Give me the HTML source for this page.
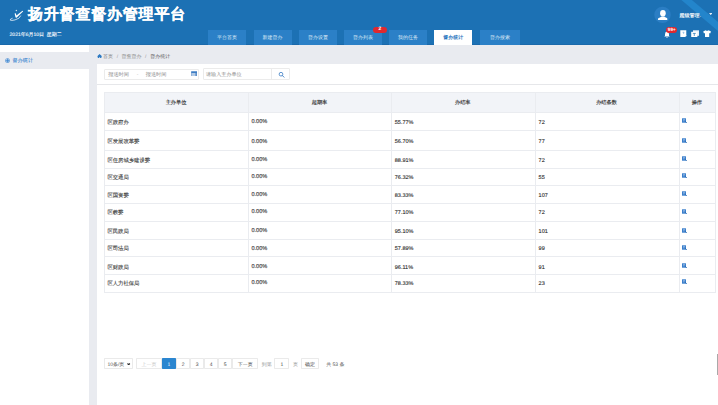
<!DOCTYPE html>
<html><head><meta charset="utf-8">
<style>
*{box-sizing:border-box;margin:0;padding:0}
html,body{text-rendering:geometricPrecision;width:718px;height:405px;overflow:hidden;background:#e9ebf0;font-family:"Liberation Sans",sans-serif;color:#333}
.a{position:absolute}
.t{white-space:nowrap}
.s{}
</style></head><body>

<div class="a" style="left:0.00px;top:0.00px;width:718.00px;height:44.70px;background:#1c71b4;"></div>
<div class="a" style="left:0.00px;top:44.00px;width:718.00px;height:0.70px;background:#1a69ab;"></div>
<svg class="a" style="left:0;top:0" width="718" height="45"><polygon points="681.4,0 691.9,0 718,22 718,31" fill="#2385cb"/></svg>
<svg class="a" style="left:0;top:0" width="30" height="30" viewBox="0 0 30 30">
<circle cx="16.4" cy="10.4" r="0.75" fill="#fff" opacity="0.75"/>
<path d="M14.6 13.4 Q15.4 12.9 15.9 13.6 L16.4 15.6 L22.2 10.9 Q23.2 10.6 23 11.6 L16.8 17.4 Q16 18 15.5 17.3 Z" fill="#fff"/>
<path d="M20.8 15.6 Q20 18.6 15 19.9 Q10.8 21 10.2 20.1 Q9.8 19.2 12.6 18.2" fill="none" stroke="#fff" stroke-width="0.85" opacity="0.85"/>
</svg>
<div class="a t" style="left:28px;top:4.6px;font-size:15px;letter-spacing:0.8px;line-height:20px;font-weight:bold;color:#fff;-webkit-text-stroke:0.2px #fff">扬升督查督办管理平台</div>
<div class="a t s" style="left:9.60px;top:30.10px;font-size:5.00px;line-height:10px;color:#f0f5fb;font-weight:normal;-webkit-text-stroke:0.12px #f0f5fb;">2021年6月10日&nbsp;&nbsp;星期二</div>
<div class="a" style="left:208.00px;top:30.00px;width:38.00px;height:14.60px;background:#2b80c7;"></div>
<div class="a t s" style="left:208.00px;top:33.00px;width:38.00px;text-align:center;font-size:5.00px;line-height:10px;color:#dbe8f5;font-weight:normal;">平台首页</div>
<div class="a" style="left:253.50px;top:30.00px;width:38.00px;height:14.60px;background:#2b80c7;"></div>
<div class="a t s" style="left:253.50px;top:33.00px;width:38.00px;text-align:center;font-size:5.00px;line-height:10px;color:#dbe8f5;font-weight:normal;">新建督办</div>
<div class="a" style="left:299.00px;top:30.00px;width:38.00px;height:14.60px;background:#2b80c7;"></div>
<div class="a t s" style="left:299.00px;top:33.00px;width:38.00px;text-align:center;font-size:5.00px;line-height:10px;color:#dbe8f5;font-weight:normal;">督办设置</div>
<div class="a" style="left:344.00px;top:30.00px;width:38.00px;height:14.60px;background:#2b80c7;"></div>
<div class="a t s" style="left:344.00px;top:33.00px;width:38.00px;text-align:center;font-size:5.00px;line-height:10px;color:#dbe8f5;font-weight:normal;">督办列表</div>
<div class="a" style="left:389.00px;top:30.00px;width:38.00px;height:14.60px;background:#2b80c7;"></div>
<div class="a t s" style="left:389.00px;top:33.00px;width:38.00px;text-align:center;font-size:5.00px;line-height:10px;color:#dbe8f5;font-weight:normal;">我的任务</div>
<div class="a" style="left:434.20px;top:30.00px;width:38.00px;height:14.80px;background:#fff;"></div>
<div class="a t s" style="left:434.20px;top:33.00px;width:38.00px;text-align:center;font-size:5.00px;line-height:10px;color:#2b77c0;font-weight:bold;">督办统计</div>
<div class="a" style="left:480.00px;top:30.00px;width:40.00px;height:14.60px;background:#2b80c7;"></div>
<div class="a t s" style="left:480.00px;top:33.00px;width:40.00px;text-align:center;font-size:5.00px;line-height:10px;color:#dbe8f5;font-weight:normal;">督办搜索</div>
<div class="a t" style="left:372.7px;top:27px;width:14.3px;height:5.8px;border-radius:3px;background:#e0282e;color:#fff;font-size:5px;line-height:5.8px;text-align:center;font-weight:bold">2</div>
<svg class="a" style="left:640px;top:0" width="40" height="30" viewBox="640 0 40 30">
<circle cx="662.5" cy="14.9" r="8.2" fill="#2b7ec4"/>
<ellipse cx="662.9" cy="13.3" rx="2.8" ry="3.3" fill="#fff"/>
<path d="M657.9 20.1 L658.1 18.6 Q658.4 17.6 660 17.4 L661.6 16.6 L664.2 16.6 L665.8 17.4 Q667.3 17.6 667.3 18.6 L667.3 20.1 Z" fill="#fff"/></svg>
<div class="a t s" style="left:679.50px;top:11.30px;font-size:5.00px;line-height:10px;color:#fff;font-weight:normal;-webkit-text-stroke:0.15px #fff;">超级管理.</div>
<svg class="a" style="left:708.5px;top:13.3px" width="3.5" height="2.2" viewBox="0 0 3.5 2.2"><path d="M0 0 L3.5 0 L1.75 2.2Z" fill="#e3edf7"/></svg>
<svg class="a" style="left:663.5px;top:30.5px" width="6" height="7" viewBox="0 0 6 7"><path d="M3 0.5 Q5 0.8 5 3.2 L5 4.8 L5.8 5.6 L0.2 5.6 L1 4.8 L1 3.2 Q1 0.8 3 0.5Z M2.2 6 L3.8 6 Q3.6 6.8 3 6.8 Q2.4 6.8 2.2 6Z" fill="#fff"/></svg>
<div class="a t" style="left:666.3px;top:27.1px;width:10.9px;height:5.7px;border-radius:3px;background:#e0282e;color:#fff;font-size:4.6px;line-height:5.7px;text-align:center;font-weight:bold">99+</div>
<svg class="a" style="left:679.5px;top:30px" width="7.2" height="7.2" viewBox="0 0 7.2 7.2"><path d="M0.3 0.2 L6.3 0.2 L6.3 5.2 L5.4 6.9 L0.3 6.9 Z" fill="#fff"/><path d="M2.6 2.3 L4 2.3 L3.5 3.8" fill="none" stroke="#5d9ad6" stroke-width="0.6"/><path d="M5.3 6.9 L6.9 5.4" stroke="#cfe0f3" stroke-width="0.6"/></svg>
<svg class="a" style="left:691px;top:30px" width="8.4" height="7.4" viewBox="0 0 8.4 7.4"><rect x="2" y="0.3" width="6" height="5.5" fill="#e9f1fa"/><rect x="0.2" y="1.8" width="6.2" height="5.5" fill="#fff"/><path d="M1.8 3.4 L4.8 3.4 M3.3 3.4 L3.3 6" stroke="#1c71b4" stroke-width="0.7"/></svg>
<svg class="a" style="left:703px;top:30px" width="8.2" height="7.4" viewBox="0 0 8.2 7.4"><path d="M2.6 0.3 Q4.1 1.4 5.6 0.3 L8 1.6 L7.2 3.4 L6.2 3 L6.2 7.2 L2 7.2 L2 3 L1 3.4 L0.2 1.6Z" fill="#fff"/></svg>
<div class="a" style="left:0.00px;top:45.00px;width:89.00px;height:360.00px;background:#fff;"></div>
<div class="a" style="left:0.00px;top:51.70px;width:89.00px;height:17.20px;background:#e9ebf0;"></div>
<svg class="a" style="left:5px;top:57.6px" width="5" height="5.4" viewBox="0 0 5 5.4"><circle cx="2.5" cy="2.6" r="2.2" fill="#bcd5ef" stroke="#5b98d6" stroke-width="0.5"/><path d="M2.7 0.6 L2.7 4.6 M0.5 2.8 L4.5 2.8" stroke="#3f86cf" stroke-width="0.9"/></svg>
<div class="a t s" style="left:12.60px;top:56.30px;font-size:5.10px;line-height:10px;color:#3a86d0;font-weight:normal;-webkit-text-stroke:0.08px #3a86d0;">督办统计</div>
<svg class="a" style="left:96.8px;top:53.6px" width="5.2" height="4.8" viewBox="0 0 5.2 4.8"><path d="M2.6 0 L5.2 2.4 L4.4 2.4 L4.4 4.8 L3.1 4.8 L3.1 3.3 L2.1 3.3 L2.1 4.8 L0.8 4.8 L0.8 2.4 L0 2.4Z" fill="#2a78c2"/></svg>
<div class="a t s" style="left:103.00px;top:52.10px;font-size:5.00px;line-height:10px;color:#888;font-weight:normal;">首页</div>
<div class="a t s" style="left:116.80px;top:52.10px;font-size:5.00px;line-height:10px;color:#999;font-weight:normal;">/</div>
<div class="a t s" style="left:121.60px;top:52.10px;font-size:5.00px;line-height:10px;color:#888;font-weight:normal;">督查督办</div>
<div class="a t s" style="left:145.00px;top:52.10px;font-size:5.00px;line-height:10px;color:#999;font-weight:normal;">/</div>
<div class="a t s" style="left:150.20px;top:52.10px;font-size:5.00px;line-height:10px;color:#555;font-weight:normal;">督办统计</div>
<div class="a" style="left:97.00px;top:64.00px;width:621.00px;height:341.00px;background:#fff;"></div>
<div class="a" style="left:104.4px;top:69.4px;width:94.2px;height:10.2px;border:0.6px solid #ebebeb;border-radius:1px"></div>
<div class="a t s" style="left:108.20px;top:70.40px;font-size:5.20px;line-height:10px;color:#8a8a8a;font-weight:normal;">报送时间</div>
<div class="a t s" style="left:136.80px;top:70.40px;font-size:5.00px;line-height:10px;color:#bbb;font-weight:normal;">-</div>
<div class="a t s" style="left:145.70px;top:70.40px;font-size:5.20px;line-height:10px;color:#8a8a8a;font-weight:normal;">报送时间</div>
<svg class="a" style="left:190.9px;top:70.9px" width="6.2" height="5.6" viewBox="0 0 6.2 5.6"><rect x="0.2" y="0.4" width="5.8" height="5" fill="#b3cbe6"/><rect x="0.2" y="0.4" width="5.8" height="1.5" fill="#2f74c0"/><rect x="4.4" y="1.9" width="1.6" height="3.5" fill="#5d8fc9"/><rect x="0.2" y="1.9" width="0.7" height="3.5" fill="#7ea6d6"/></svg>
<div class="a" style="left:202.9px;top:68.4px;width:87.3px;height:12px;border:0.6px solid #ebebeb;border-radius:1px"></div>
<div class="a" style="left:271.00px;top:68.60px;width:0.60px;height:11.60px;background:#ebebeb;"></div>
<div class="a t s" style="left:206.00px;top:70.40px;font-size:5.10px;line-height:10px;color:#8a8a8a;font-weight:normal;">请输入主办单位</div>
<svg class="a" style="left:0;top:0" width="300" height="90" viewBox="0 0 300 90"><circle cx="281" cy="74.2" r="1.85" fill="none" stroke="#2f74c0" stroke-width="0.75"/><path d="M282.4 75.6 L284 77.2" stroke="#2f74c0" stroke-width="0.85" stroke-linecap="round"/></svg>
<div class="a" style="left:97.00px;top:84.00px;width:621.00px;height:0.80px;background:#e6e7ea;"></div>
<div class="a" style="left:104.00px;top:92.00px;width:611.20px;height:19.70px;background:#f2f4f8;"></div>
<div class="a" style="left:104.00px;top:92.00px;width:611.20px;height:0.80px;background:#eaecf0;"></div>
<div class="a" style="left:104.00px;top:111.70px;width:611.20px;height:0.80px;background:#eaecf0;"></div>
<div class="a" style="left:104.00px;top:130.40px;width:611.20px;height:0.80px;background:#eaecf0;"></div>
<div class="a" style="left:104.00px;top:150.20px;width:611.20px;height:0.80px;background:#eaecf0;"></div>
<div class="a" style="left:104.00px;top:167.80px;width:611.20px;height:0.80px;background:#eaecf0;"></div>
<div class="a" style="left:104.00px;top:185.40px;width:611.20px;height:0.80px;background:#eaecf0;"></div>
<div class="a" style="left:104.00px;top:203.00px;width:611.20px;height:0.80px;background:#eaecf0;"></div>
<div class="a" style="left:104.00px;top:221.30px;width:611.20px;height:0.80px;background:#eaecf0;"></div>
<div class="a" style="left:104.00px;top:238.70px;width:611.20px;height:0.80px;background:#eaecf0;"></div>
<div class="a" style="left:104.00px;top:256.30px;width:611.20px;height:0.80px;background:#eaecf0;"></div>
<div class="a" style="left:104.00px;top:274.40px;width:611.20px;height:0.80px;background:#eaecf0;"></div>
<div class="a" style="left:104.00px;top:292.10px;width:611.20px;height:0.80px;background:#eaecf0;"></div>
<div class="a" style="left:104.00px;top:92.00px;width:0.80px;height:200.90px;background:#eaecf0;"></div>
<div class="a" style="left:248.00px;top:92.00px;width:0.80px;height:200.90px;background:#eaecf0;"></div>
<div class="a" style="left:391.00px;top:92.00px;width:0.80px;height:200.90px;background:#eaecf0;"></div>
<div class="a" style="left:534.50px;top:92.00px;width:0.80px;height:200.90px;background:#eaecf0;"></div>
<div class="a" style="left:678.50px;top:92.00px;width:0.80px;height:200.90px;background:#eaecf0;"></div>
<div class="a" style="left:715.20px;top:92.00px;width:0.80px;height:200.90px;background:#eaecf0;"></div>
<div class="a t s" style="left:136.00px;top:97.70px;width:80.00px;text-align:center;font-size:5.20px;line-height:10px;color:#333;font-weight:normal;-webkit-text-stroke:0.14px #333;">主办单位</div>
<div class="a t s" style="left:279.50px;top:97.70px;width:80.00px;text-align:center;font-size:5.20px;line-height:10px;color:#333;font-weight:normal;-webkit-text-stroke:0.14px #333;">超期率</div>
<div class="a t s" style="left:422.75px;top:97.70px;width:80.00px;text-align:center;font-size:5.20px;line-height:10px;color:#333;font-weight:normal;-webkit-text-stroke:0.14px #333;">办结率</div>
<div class="a t s" style="left:566.50px;top:97.70px;width:80.00px;text-align:center;font-size:5.20px;line-height:10px;color:#333;font-weight:normal;-webkit-text-stroke:0.14px #333;">办结条数</div>
<div class="a t s" style="left:656.85px;top:97.70px;width:80.00px;text-align:center;font-size:5.20px;line-height:10px;color:#333;font-weight:normal;-webkit-text-stroke:0.14px #333;">操作</div>
<div class="a t s" style="left:107.40px;top:117.80px;font-size:5.35px;line-height:10px;color:#444;font-weight:normal;-webkit-text-stroke:0.12px #444;">区政府办</div>
<div class="a t s" style="left:251.40px;top:117.20px;font-size:5.60px;line-height:10px;color:#555;font-weight:normal;-webkit-text-stroke:0.2px #555;">0.00%</div>
<div class="a t s" style="left:394.80px;top:117.80px;font-size:5.50px;line-height:10px;color:#2b2b2b;font-weight:normal;-webkit-text-stroke:0.12px #2b2b2b;">55.77%</div>
<div class="a t s" style="left:538.60px;top:117.80px;font-size:5.50px;line-height:10px;color:#2b2b2b;font-weight:normal;-webkit-text-stroke:0.12px #2b2b2b;">72</div>
<svg class="a" style="left:682px;top:118.40px" width="5" height="5" viewBox="0 0 5 5"><rect x="0" y="0.3" width="4" height="4.4" fill="#3b7fcc"/><path d="M1 1.6 L3 1.6 M1 2.8 L2.6 2.8" stroke="#cfe0f3" stroke-width="0.5"/><path d="M3.2 3.4 L4.9 4.9" stroke="#1c5ea8" stroke-width="0.8"/></svg>
<div class="a t s" style="left:107.40px;top:137.10px;font-size:5.35px;line-height:10px;color:#444;font-weight:normal;-webkit-text-stroke:0.12px #444;">区发展改革委</div>
<div class="a t s" style="left:251.40px;top:136.50px;font-size:5.60px;line-height:10px;color:#555;font-weight:normal;-webkit-text-stroke:0.2px #555;">0.00%</div>
<div class="a t s" style="left:394.80px;top:137.10px;font-size:5.50px;line-height:10px;color:#2b2b2b;font-weight:normal;-webkit-text-stroke:0.12px #2b2b2b;">56.70%</div>
<div class="a t s" style="left:538.60px;top:137.10px;font-size:5.50px;line-height:10px;color:#2b2b2b;font-weight:normal;-webkit-text-stroke:0.12px #2b2b2b;">77</div>
<svg class="a" style="left:682px;top:137.70px" width="5" height="5" viewBox="0 0 5 5"><rect x="0" y="0.3" width="4" height="4.4" fill="#3b7fcc"/><path d="M1 1.6 L3 1.6 M1 2.8 L2.6 2.8" stroke="#cfe0f3" stroke-width="0.5"/><path d="M3.2 3.4 L4.9 4.9" stroke="#1c5ea8" stroke-width="0.8"/></svg>
<div class="a t s" style="left:107.40px;top:155.60px;font-size:5.35px;line-height:10px;color:#444;font-weight:normal;-webkit-text-stroke:0.12px #444;">区住房城乡建设委</div>
<div class="a t s" style="left:251.40px;top:155.00px;font-size:5.60px;line-height:10px;color:#555;font-weight:normal;-webkit-text-stroke:0.2px #555;">0.00%</div>
<div class="a t s" style="left:394.80px;top:155.60px;font-size:5.50px;line-height:10px;color:#2b2b2b;font-weight:normal;-webkit-text-stroke:0.12px #2b2b2b;">88.91%</div>
<div class="a t s" style="left:538.60px;top:155.60px;font-size:5.50px;line-height:10px;color:#2b2b2b;font-weight:normal;-webkit-text-stroke:0.12px #2b2b2b;">72</div>
<svg class="a" style="left:682px;top:156.20px" width="5" height="5" viewBox="0 0 5 5"><rect x="0" y="0.3" width="4" height="4.4" fill="#3b7fcc"/><path d="M1 1.6 L3 1.6 M1 2.8 L2.6 2.8" stroke="#cfe0f3" stroke-width="0.5"/><path d="M3.2 3.4 L4.9 4.9" stroke="#1c5ea8" stroke-width="0.8"/></svg>
<div class="a t s" style="left:107.40px;top:172.80px;font-size:5.35px;line-height:10px;color:#444;font-weight:normal;-webkit-text-stroke:0.12px #444;">区交通局</div>
<div class="a t s" style="left:251.40px;top:172.20px;font-size:5.60px;line-height:10px;color:#555;font-weight:normal;-webkit-text-stroke:0.2px #555;">0.00%</div>
<div class="a t s" style="left:394.80px;top:172.80px;font-size:5.50px;line-height:10px;color:#2b2b2b;font-weight:normal;-webkit-text-stroke:0.12px #2b2b2b;">76.32%</div>
<div class="a t s" style="left:538.60px;top:172.80px;font-size:5.50px;line-height:10px;color:#2b2b2b;font-weight:normal;-webkit-text-stroke:0.12px #2b2b2b;">55</div>
<svg class="a" style="left:682px;top:173.40px" width="5" height="5" viewBox="0 0 5 5"><rect x="0" y="0.3" width="4" height="4.4" fill="#3b7fcc"/><path d="M1 1.6 L3 1.6 M1 2.8 L2.6 2.8" stroke="#cfe0f3" stroke-width="0.5"/><path d="M3.2 3.4 L4.9 4.9" stroke="#1c5ea8" stroke-width="0.8"/></svg>
<div class="a t s" style="left:107.40px;top:190.60px;font-size:5.35px;line-height:10px;color:#444;font-weight:normal;-webkit-text-stroke:0.12px #444;">区国资委</div>
<div class="a t s" style="left:251.40px;top:190.00px;font-size:5.60px;line-height:10px;color:#555;font-weight:normal;-webkit-text-stroke:0.2px #555;">0.00%</div>
<div class="a t s" style="left:394.80px;top:190.60px;font-size:5.50px;line-height:10px;color:#2b2b2b;font-weight:normal;-webkit-text-stroke:0.12px #2b2b2b;">83.33%</div>
<div class="a t s" style="left:538.60px;top:190.60px;font-size:5.50px;line-height:10px;color:#2b2b2b;font-weight:normal;-webkit-text-stroke:0.12px #2b2b2b;">107</div>
<svg class="a" style="left:682px;top:191.20px" width="5" height="5" viewBox="0 0 5 5"><rect x="0" y="0.3" width="4" height="4.4" fill="#3b7fcc"/><path d="M1 1.6 L3 1.6 M1 2.8 L2.6 2.8" stroke="#cfe0f3" stroke-width="0.5"/><path d="M3.2 3.4 L4.9 4.9" stroke="#1c5ea8" stroke-width="0.8"/></svg>
<div class="a t s" style="left:107.40px;top:208.00px;font-size:5.35px;line-height:10px;color:#444;font-weight:normal;-webkit-text-stroke:0.12px #444;">区教委</div>
<div class="a t s" style="left:251.40px;top:207.40px;font-size:5.60px;line-height:10px;color:#555;font-weight:normal;-webkit-text-stroke:0.2px #555;">0.00%</div>
<div class="a t s" style="left:394.80px;top:208.00px;font-size:5.50px;line-height:10px;color:#2b2b2b;font-weight:normal;-webkit-text-stroke:0.12px #2b2b2b;">77.10%</div>
<div class="a t s" style="left:538.60px;top:208.00px;font-size:5.50px;line-height:10px;color:#2b2b2b;font-weight:normal;-webkit-text-stroke:0.12px #2b2b2b;">72</div>
<svg class="a" style="left:682px;top:208.60px" width="5" height="5" viewBox="0 0 5 5"><rect x="0" y="0.3" width="4" height="4.4" fill="#3b7fcc"/><path d="M1 1.6 L3 1.6 M1 2.8 L2.6 2.8" stroke="#cfe0f3" stroke-width="0.5"/><path d="M3.2 3.4 L4.9 4.9" stroke="#1c5ea8" stroke-width="0.8"/></svg>
<div class="a t s" style="left:107.40px;top:227.00px;font-size:5.35px;line-height:10px;color:#444;font-weight:normal;-webkit-text-stroke:0.12px #444;">区民政局</div>
<div class="a t s" style="left:251.40px;top:226.40px;font-size:5.60px;line-height:10px;color:#555;font-weight:normal;-webkit-text-stroke:0.2px #555;">0.00%</div>
<div class="a t s" style="left:394.80px;top:227.00px;font-size:5.50px;line-height:10px;color:#2b2b2b;font-weight:normal;-webkit-text-stroke:0.12px #2b2b2b;">95.10%</div>
<div class="a t s" style="left:538.60px;top:227.00px;font-size:5.50px;line-height:10px;color:#2b2b2b;font-weight:normal;-webkit-text-stroke:0.12px #2b2b2b;">101</div>
<svg class="a" style="left:682px;top:227.60px" width="5" height="5" viewBox="0 0 5 5"><rect x="0" y="0.3" width="4" height="4.4" fill="#3b7fcc"/><path d="M1 1.6 L3 1.6 M1 2.8 L2.6 2.8" stroke="#cfe0f3" stroke-width="0.5"/><path d="M3.2 3.4 L4.9 4.9" stroke="#1c5ea8" stroke-width="0.8"/></svg>
<div class="a t s" style="left:107.40px;top:244.20px;font-size:5.35px;line-height:10px;color:#444;font-weight:normal;-webkit-text-stroke:0.12px #444;">区司法局</div>
<div class="a t s" style="left:251.40px;top:243.60px;font-size:5.60px;line-height:10px;color:#555;font-weight:normal;-webkit-text-stroke:0.2px #555;">0.00%</div>
<div class="a t s" style="left:394.80px;top:244.20px;font-size:5.50px;line-height:10px;color:#2b2b2b;font-weight:normal;-webkit-text-stroke:0.12px #2b2b2b;">57.89%</div>
<div class="a t s" style="left:538.60px;top:244.20px;font-size:5.50px;line-height:10px;color:#2b2b2b;font-weight:normal;-webkit-text-stroke:0.12px #2b2b2b;">99</div>
<svg class="a" style="left:682px;top:244.80px" width="5" height="5" viewBox="0 0 5 5"><rect x="0" y="0.3" width="4" height="4.4" fill="#3b7fcc"/><path d="M1 1.6 L3 1.6 M1 2.8 L2.6 2.8" stroke="#cfe0f3" stroke-width="0.5"/><path d="M3.2 3.4 L4.9 4.9" stroke="#1c5ea8" stroke-width="0.8"/></svg>
<div class="a t s" style="left:107.40px;top:262.50px;font-size:5.35px;line-height:10px;color:#444;font-weight:normal;-webkit-text-stroke:0.12px #444;">区财政局</div>
<div class="a t s" style="left:251.40px;top:261.90px;font-size:5.60px;line-height:10px;color:#555;font-weight:normal;-webkit-text-stroke:0.2px #555;">0.00%</div>
<div class="a t s" style="left:394.80px;top:262.50px;font-size:5.50px;line-height:10px;color:#2b2b2b;font-weight:normal;-webkit-text-stroke:0.12px #2b2b2b;">96.11%</div>
<div class="a t s" style="left:538.60px;top:262.50px;font-size:5.50px;line-height:10px;color:#2b2b2b;font-weight:normal;-webkit-text-stroke:0.12px #2b2b2b;">91</div>
<svg class="a" style="left:682px;top:263.10px" width="5" height="5" viewBox="0 0 5 5"><rect x="0" y="0.3" width="4" height="4.4" fill="#3b7fcc"/><path d="M1 1.6 L3 1.6 M1 2.8 L2.6 2.8" stroke="#cfe0f3" stroke-width="0.5"/><path d="M3.2 3.4 L4.9 4.9" stroke="#1c5ea8" stroke-width="0.8"/></svg>
<div class="a t s" style="left:107.40px;top:278.70px;font-size:5.35px;line-height:10px;color:#444;font-weight:normal;-webkit-text-stroke:0.12px #444;">区人力社保局</div>
<div class="a t s" style="left:251.40px;top:278.10px;font-size:5.60px;line-height:10px;color:#555;font-weight:normal;-webkit-text-stroke:0.2px #555;">0.00%</div>
<div class="a t s" style="left:394.80px;top:278.70px;font-size:5.50px;line-height:10px;color:#2b2b2b;font-weight:normal;-webkit-text-stroke:0.12px #2b2b2b;">78.33%</div>
<div class="a t s" style="left:538.60px;top:278.70px;font-size:5.50px;line-height:10px;color:#2b2b2b;font-weight:normal;-webkit-text-stroke:0.12px #2b2b2b;">23</div>
<svg class="a" style="left:682px;top:279.30px" width="5" height="5" viewBox="0 0 5 5"><rect x="0" y="0.3" width="4" height="4.4" fill="#3b7fcc"/><path d="M1 1.6 L3 1.6 M1 2.8 L2.6 2.8" stroke="#cfe0f3" stroke-width="0.5"/><path d="M3.2 3.4 L4.9 4.9" stroke="#1c5ea8" stroke-width="0.8"/></svg>
<div class="a t" style="left:104.40px;top:358.1px;width:28.40px;height:11.3px;border:0.6px solid #eaeaea;background:#fff;border-radius:0.8px"></div>
<div class="a t s" style="left:107.40px;top:359.85px;font-size:5.00px;line-height:10px;color:#555;font-weight:normal;">10条/页</div>
<svg class="a" style="left:127.3px;top:362.55px" width="3.4" height="2.4" viewBox="0 0 3.4 2.4"><path d="M0.5 0.5 L1.7 1.7 L2.9 0.5" fill="none" stroke="#222" stroke-width="1.1"/></svg>
<div class="a t" style="left:136.30px;top:358.1px;width:25.40px;height:11.3px;border:0.6px solid #eaeaea;background:#fff;border-radius:0.8px"></div>
<div class="a t s" style="left:131.30px;top:359.85px;width:35.40px;text-align:center;font-size:5.00px;line-height:10px;color:#c8c8c8;font-weight:normal;">上一页</div>
<div class="a t" style="left:161.70px;top:358.1px;width:14.30px;height:11.3px;border:0.6px solid #2b86d0;background:#2b86d0;border-radius:0.8px"></div>
<div class="a t s" style="left:156.70px;top:359.85px;width:24.30px;text-align:center;font-size:5.00px;line-height:10px;color:#fff;font-weight:normal;">1</div>
<div class="a t" style="left:176.00px;top:358.1px;width:14.10px;height:11.3px;border:0.6px solid #eaeaea;background:#fff;border-radius:0.8px"></div>
<div class="a t s" style="left:171.00px;top:359.85px;width:24.10px;text-align:center;font-size:5.00px;line-height:10px;color:#444;font-weight:normal;">2</div>
<div class="a t" style="left:190.00px;top:358.1px;width:14.10px;height:11.3px;border:0.6px solid #eaeaea;background:#fff;border-radius:0.8px"></div>
<div class="a t s" style="left:185.00px;top:359.85px;width:24.10px;text-align:center;font-size:5.00px;line-height:10px;color:#444;font-weight:normal;">3</div>
<div class="a t" style="left:204.10px;top:358.1px;width:14.10px;height:11.3px;border:0.6px solid #eaeaea;background:#fff;border-radius:0.8px"></div>
<div class="a t s" style="left:199.10px;top:359.85px;width:24.10px;text-align:center;font-size:5.00px;line-height:10px;color:#444;font-weight:normal;">4</div>
<div class="a t" style="left:218.20px;top:358.1px;width:14.10px;height:11.3px;border:0.6px solid #eaeaea;background:#fff;border-radius:0.8px"></div>
<div class="a t s" style="left:213.20px;top:359.85px;width:24.10px;text-align:center;font-size:5.00px;line-height:10px;color:#444;font-weight:normal;">5</div>
<div class="a t" style="left:232.30px;top:358.1px;width:25.80px;height:11.3px;border:0.6px solid #eaeaea;background:#fff;border-radius:0.8px"></div>
<div class="a t s" style="left:227.30px;top:359.85px;width:35.80px;text-align:center;font-size:5.00px;line-height:10px;color:#444;font-weight:normal;">下一页</div>
<div class="a t s" style="left:261.80px;top:359.85px;font-size:5.00px;line-height:10px;color:#999;font-weight:normal;">到第</div>
<div class="a t" style="left:274.40px;top:358.1px;width:15.10px;height:11.3px;border:0.6px solid #eaeaea;background:#fff;border-radius:0.8px"></div>
<div class="a t s" style="left:269.40px;top:359.85px;width:25.10px;text-align:center;font-size:5.00px;line-height:10px;color:#444;font-weight:normal;">1</div>
<div class="a t s" style="left:293.10px;top:359.85px;font-size:5.00px;line-height:10px;color:#999;font-weight:normal;">页</div>
<div class="a t" style="left:301.40px;top:358.1px;width:17.30px;height:11.3px;border:0.6px solid #eaeaea;background:#fff;border-radius:0.8px"></div>
<div class="a t s" style="left:296.40px;top:359.85px;width:27.30px;text-align:center;font-size:5.00px;line-height:10px;color:#444;font-weight:normal;">确定</div>
<div class="a t s" style="left:326.20px;top:359.85px;font-size:5.00px;line-height:10px;color:#555;font-weight:normal;">共 53 条</div>
<div class="a" style="left:716.60px;top:354.00px;width:1.40px;height:21.00px;background:#a9a9a9;"></div>
</body></html>
